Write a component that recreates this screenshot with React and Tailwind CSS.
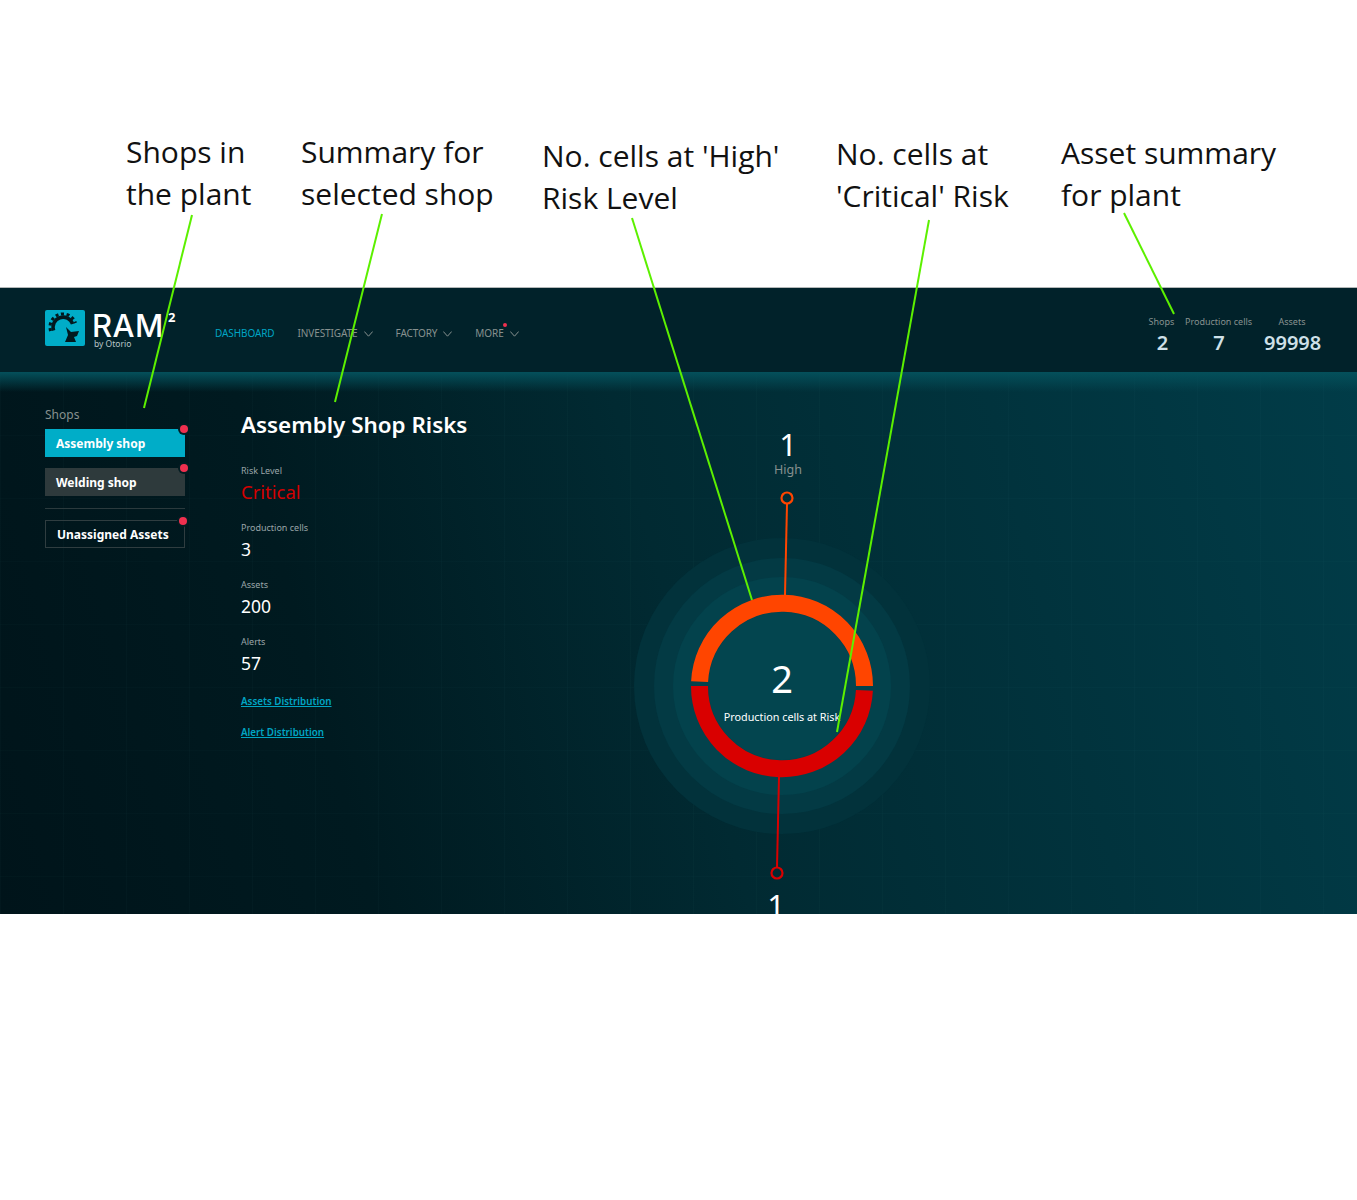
import React from 'react';

const notes = [
  { text: ['Shops in', 'the plant'], cls: 'left-[126px] top-[131px]' },
  { text: ['Summary for', 'selected shop'], cls: 'left-[301px] top-[131px]' },
  { text: ["No. cells at 'High'", 'Risk Level'], cls: 'left-[542px] top-[135px]' },
  { text: ['No. cells at', "'Critical' Risk"], cls: 'left-[836px] top-[133px]' },
  { text: ['Asset summary', 'for plant'], cls: 'left-[1061px] top-[132px]' },
];

const details = [
  { label: 'Production cells', value: '3' },
  { label: 'Assets', value: '200' },
  { label: 'Alerts', value: '57' },
];

function Logo() {
  return (
    <svg width="40" height="36" viewBox="0 0 40 36" className="mt-[22px] shrink-0 rounded-[2px] bg-[#00adc8]">
      <path d="M8.6 20.5 A10 10 0 1 1 27.6 14" fill="none" stroke="#02191e" strokeWidth="3.6" />
      <path d="M5.6 21 A13 13 0 1 1 30.5 13" fill="none" stroke="#02191e" strokeWidth="3" strokeDasharray="3 2.6" />
      <path d="M21 17 L26 22 L34 21 L32 26 L29 27 L31 32 L20 32 L23 25 Z" fill="#02191e" />
    </svg>
  );
}

function Chevron() {
  return (
    <svg width="9" height="6" viewBox="0 0 9 6" className="mt-[1px]">
      <polyline points="0.3,0.5 4.5,5.2 8.7,0.5" fill="none" stroke="#87918f" strokeWidth="1" />
    </svg>
  );
}

function NavItem({ label, active, dot }) {
  return (
    <div className={`relative flex items-center gap-[6px] text-[10px] leading-[15px] tracking-[-0.1px] ${active ? 'text-[#00a5c4]' : 'text-[#87918f]'}`}>
      {label}
      {dot && <span className="absolute left-[28px] top-[-3px] h-1 w-1 rounded-full bg-[#f0304f]" />}
      {!active && <Chevron />}
    </div>
  );
}

function ShopButton({ label, cls }) {
  return (
    <div className={`relative flex h-7 w-[140px] items-center pt-[2px] text-[12px] font-bold text-white ${cls}`}>
      {label}
      <span className="absolute -right-[3px] -top-1 h-2 w-2 rounded-full bg-[#f0304f] shadow-[0_0_0_2px_#031c22]" />
    </div>
  );
}

function Chart() {
  return (
    <svg width="330" height="494" viewBox="620 420 330 494" className="block">
      <circle cx="782" cy="686" r="148" fill="#02323b" />
      <circle cx="782" cy="686" r="128" fill="#033a44" />
      <circle cx="782" cy="686" r="109" fill="#03424c" />
      <circle cx="782" cy="686" r="74" fill="#03454f" />
      <path d="M699.6 681.7 A82.5 82.5 0 0 1 864.5 686" fill="none" stroke="#ff4500" strokeWidth="17" />
      <path d="M864.4 690.3 A82.5 82.5 0 0 1 699.5 686" fill="none" stroke="#d90000" strokeWidth="17" />
      <line x1="787" y1="504" x2="785" y2="595" stroke="#ff4500" strokeWidth="2" />
      <circle cx="787" cy="498" r="5.5" fill="none" stroke="#ff4500" strokeWidth="2.2" />
      <line x1="779" y1="777" x2="777" y2="867" stroke="#d90000" strokeWidth="2" />
      <circle cx="777" cy="873" r="5.5" fill="none" stroke="#d90000" strokeWidth="2.2" />
      <text x="788" y="456" textAnchor="middle" fill="#fff" fontSize="31">1</text>
      <text x="788" y="474" textAnchor="middle" fill="#87918f" fontSize="12.5">High</text>
      <text x="782" y="693" textAnchor="middle" fill="#fff" fontSize="38">2</text>
      <text x="782" y="721" textAnchor="middle" fill="#fff" fontSize="10.8">Production cells at Risk</text>
      <text x="776" y="917" textAnchor="middle" fill="#fff" fontSize="31">1</text>
    </svg>
  );
}

export default function App() {
  return (
    <div className="relative h-[1200px] overflow-hidden bg-white font-['Noto_Sans',sans-serif]">
      {/* Annotations */}
      {notes.map((note) => (
        <div key={note.text[0]} className={`absolute whitespace-nowrap font-['Open_Sans',sans-serif] text-[30px] leading-[42px] text-[#111] ${note.cls}`}>
          {note.text[0]}
          <br />
          {note.text[1]}
        </div>
      ))}

      <div className="h-[287px]" />

      <div className="flex h-[627px] flex-col overflow-hidden">
        {/* Header */}
        <header className="flex h-[85px] shrink-0 items-start border-t border-[#b4b8b8] bg-[#01222a] pl-[45px] pr-9">
          <Logo />
          <div className="relative ml-[7px] mt-[23px] w-[87px] text-white">
            <div className="font-['Inter',sans-serif] text-[31px] font-medium leading-[30px] tracking-[0.5px]">RAM</div>
            <div className="-mt-[1px] pl-[2px] text-[8.5px] leading-[8px] text-[#b9c5c8]">by Otorio</div>
            <span className="absolute left-[76px] top-[-2px] text-[13px] font-bold leading-4">2</span>
          </div>
          <nav className="ml-[36px] mt-[38px] flex items-center gap-[23px]">
            <NavItem label="DASHBOARD" active />
            <NavItem label="INVESTIGATE" />
            <NavItem label="FACTORY" />
            <NavItem label="MORE" dot />
          </nav>
          <div className="ml-auto mt-[27px] grid grid-cols-[27px_66px_60px] gap-x-[10px] text-center">
            <div className="text-[9px] leading-[13px] text-[#87918f]">Shops</div>
            <div className="whitespace-nowrap text-[9px] leading-[13px] text-[#87918f]">Production cells</div>
            <div className="pl-[2px] text-[9px] leading-[13px] text-[#87918f]">Assets</div>
            <div className="pl-[2px] text-[20px] font-semibold leading-[29px] text-[#cfe0e8]">2</div>
            <div className="pl-[2px] text-[20px] font-semibold leading-[29px] text-[#cfe0e8]">7</div>
            <div className="pl-[3px] text-[20px] font-semibold leading-[29px] text-[#cfe0e8]">99998</div>
          </div>
        </header>

        {/* Main */}
        <main className="relative flex flex-1 bg-[linear-gradient(75deg,#00141a_0%,#001a20_25%,#012a32_50%,#013c48_100%)] pl-[45px]">
          <div className="pointer-events-none absolute inset-0 bg-[linear-gradient(to_right,rgba(80,170,170,0.03)_1px,transparent_1px),linear-gradient(to_bottom,rgba(80,170,170,0.025)_1px,transparent_1px)] bg-[size:63px_63px]" />
          <div className="pointer-events-none absolute inset-x-0 top-0 h-5 bg-gradient-to-b from-[#04505b] to-transparent" />

          {/* Shops */}
          <aside className="relative w-[196px] shrink-0 pt-[35px]">
            <div className="mb-[6px] text-[12px] leading-[16px] text-[#87918f]">Shops</div>
            <ShopButton label="Assembly shop" cls="bg-[#00adc8] pl-[11px]" />
            <ShopButton label="Welding shop" cls="mt-[11px] bg-[#2e3a3c] pl-[11px]" />
            <div className="mt-3 h-px w-[140px] bg-[#2b3a3d]" />
            <ShopButton label="Unassigned Assets" cls="mt-[11px] border border-[#2f3d40] pl-[11px]" />
          </aside>

          {/* Summary */}
          <section className="relative w-[379px] shrink-0 pt-[36px] text-white">
            <h2 className="text-[22.4px] font-semibold leading-[34px]">Assembly Shop Risks</h2>
            <div className="mt-[22px] text-[9px] leading-[14px] text-[#9aa5a8]">Risk Level</div>
            <div className="-mt-[1px] text-[18.5px] leading-[30px] text-[#d50000]">Critical</div>
            {details.map((item) => (
              <div key={item.label} className="mt-[14px]">
                <div className="text-[9px] leading-[14px] text-[#9aa5a8]">{item.label}</div>
                <div className="-mt-[1px] text-[17.5px] leading-[30px]">{item.value}</div>
              </div>
            ))}
            <a className="mt-[17px] block text-[9.8px] font-semibold leading-[14px] text-[#00a5c4] underline">Assets Distribution</a>
            <a className="mt-[17px] block text-[9.8px] font-semibold leading-[14px] text-[#00a5c4] underline">Alert Distribution</a>
          </section>

          {/* Risk ring */}
          <div className="relative pt-[48px]">
            <Chart />
          </div>
        </main>
      </div>

      {/* Callout lines */}
      <svg className="pointer-events-none absolute left-0 top-0" width="1357" height="1200">
        <g stroke="#5cf000" strokeWidth="2">
          <line x1="192" y1="215" x2="144" y2="408" />
          <line x1="382" y1="214" x2="335" y2="402" />
          <line x1="632" y1="218" x2="752" y2="600" />
          <line x1="929" y1="220" x2="837" y2="732" />
          <line x1="1124" y1="213" x2="1174" y2="314" />
        </g>
      </svg>
    </div>
  );
}
